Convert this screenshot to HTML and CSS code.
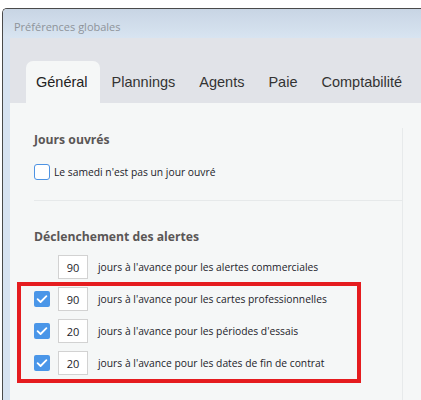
FILE: index.html
```html
<!DOCTYPE html>
<html lang="fr">
<head>
<meta charset="utf-8">
<title>Préférences globales</title>
<link rel="stylesheet" href="styles.css">
</head>
<body>
<div class="window">
  <div class="titlebar">Préférences globales</div>
  <div class="frame">
    <div class="strip"></div>
    <div class="main">
      <div class="tabs">
        <div class="tab active">Général</div>
        <div class="tab">Plannings</div>
        <div class="tab">Agents</div>
        <div class="tab">Paie</div>
        <div class="tab">Comptabilité</div>
      </div>
      <div class="panel">
        <div class="inner">
          <h2 class="heading">Jours ouvrés</h2>
          <label class="check-row">
            <span class="cb"></span>
            <span class="lbl">Le samedi n'est pas un jour ouvré</span>
          </label>
          <div class="sep"></div>
          <h2 class="heading heading2">Déclenchement des alertes</h2>
          <div class="rows">
            <div class="row">
              <span class="cb-space"></span>
              <span class="num">90</span>
              <span class="lbl">jours à l'avance pour les alertes commerciales</span>
            </div>
            <div class="row">
              <span class="cb checked"><svg viewBox="0 0 16 16" width="16" height="16"><path d="M3.6 8.2 L6.6 11 L12.4 5.2" fill="none" stroke="#fff" stroke-width="1.8" stroke-linecap="round" stroke-linejoin="round"/></svg></span>
              <span class="num">90</span>
              <span class="lbl">jours à l'avance pour les cartes professionnelles</span>
            </div>
            <div class="row">
              <span class="cb checked"><svg viewBox="0 0 16 16" width="16" height="16"><path d="M3.6 8.2 L6.6 11 L12.4 5.2" fill="none" stroke="#fff" stroke-width="1.8" stroke-linecap="round" stroke-linejoin="round"/></svg></span>
              <span class="num">20</span>
              <span class="lbl">jours à l'avance pour les périodes d'essais</span>
            </div>
            <div class="row">
              <span class="cb checked"><svg viewBox="0 0 16 16" width="16" height="16"><path d="M3.6 8.2 L6.6 11 L12.4 5.2" fill="none" stroke="#fff" stroke-width="1.8" stroke-linecap="round" stroke-linejoin="round"/></svg></span>
              <span class="num">20</span>
              <span class="lbl">jours à l'avance pour les dates de fin de contrat</span>
            </div>
          </div>
        </div>
      </div>
    </div>
  </div>
  <div class="highlight"></div>
</div>
</body>
</html>
```

FILE: styles.css
```css
* { box-sizing: border-box; }
html, body {
  margin: 0;
  padding: 0;
  background: #ffffff;
  width: 421px;
  height: 400px;
  overflow: hidden;
}
.window {
  position: relative;
  margin: 8px 0 0 2px;
  border-left: 1px solid #4a4a4a;
  border-top: 1px solid #4a4a4a;
  border-top-left-radius: 5px;
  height: 392px;
  overflow: hidden;
  font-family: "Open Sans", "Noto Sans", sans-serif;
}
.titlebar {
  height: 29px;
  background: linear-gradient(#c8d5e4, #d8e4f1);
  color: #8e939a;
  font-size: 11px;
  padding: 11px 0 0 11px;
  line-height: 14px;
}
.frame {
  display: flex;
  height: 363px;
}
.strip {
  width: 7px;
  background: #d7e3f1;
  flex: none;
}
.main {
  flex: 1;
  display: flex;
  flex-direction: column;
}
.tabs {
  height: 65px;
  background: #e1e3e8;
  display: flex;
  align-items: flex-end;
  padding-left: 16px;
  font-family: "Liberation Sans", Arial, sans-serif;
  font-size: 14.5px;
  color: #333;
}
.tab {
  height: 42px;
  line-height: 42px;
  padding: 0 12px;
  white-space: nowrap;
}
.tab.active {
  background: #f5f7f7;
  border-radius: 7px 7px 0 0;
  padding: 0 12px 0 10px;
  color: #222;
}
.panel {
  flex: 1;
  background: #f5f7f7;
  padding: 25px 0 0 24px;
}
.inner {
  width: 369px;
  height: 100%;
  border-right: 1px solid #e7eaeb;
}
.heading {
  margin: 0;
  font-size: 12.2px;
  font-weight: bold;
  color: #5a5656;
  line-height: 18px;
  padding-top: 3px;
}
.check-row {
  display: flex;
  align-items: center;
  gap: 4px;
  margin-top: 15px;
  height: 16px;
}
.cb {
  width: 16px;
  height: 16px;
  border: 1.5px solid #4d93e3;
  border-radius: 3px;
  background: #fff;
  flex: none;
  display: block;
}
.cb.checked {
  background: #4a96e8;
  border: none;
  border-radius: 2px;
}
.cb svg { display: block; }
.lbl {
  font-size: 10.3px;
  color: #1c1c2a;
  white-space: nowrap;
}
.sep {
  margin-top: 20px;
  height: 1px;
  background: #e6e9ea;
  margin-right: -1px;
}
.heading2 { margin-top: 24px; }
.rows {
  margin-top: 5px;
  display: flex;
  flex-direction: column;
}
.row {
  display: flex;
  align-items: center;
  height: 32px;
}
.cb-space { width: 16px; flex: none; }
.row .cb { margin-right: 8px; }
.row .cb-space { margin-right: 8px; }
.num {
  width: 30px;
  height: 24px;
  border: 1px solid #d2d2d2;
  background: #fff;
  font-size: 11px;
  color: #1c1c2a;
  display: flex;
  align-items: center;
  justify-content: center;
  margin-right: 10px;
  flex: none;
}
.highlight {
  position: absolute;
  left: 14px;
  top: 273px;
  width: 344px;
  height: 101px;
  border: 4px solid #e51c1f;
  pointer-events: none;
}
```
